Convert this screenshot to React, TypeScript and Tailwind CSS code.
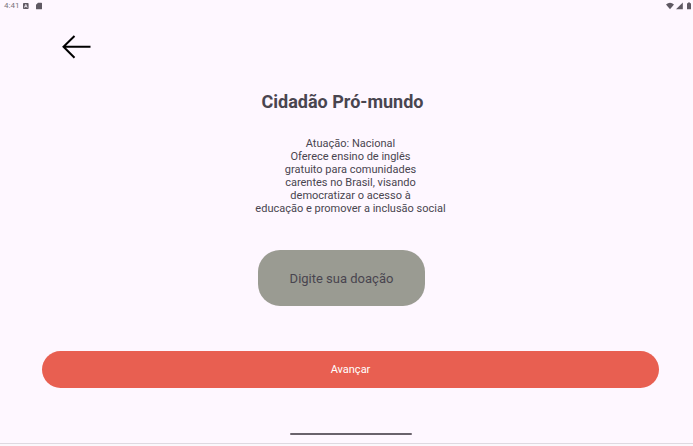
import React from "react";

function StatusBar() {
  return (
    <header className="flex h-3 items-center justify-between pr-px pl-1 text-[#7a747d]">
      <div className="flex items-center">
        <span className="w-[19px] text-[8px] leading-3">4:41</span>
        <svg className="h-2 w-1.5" viewBox="0 0 6 8" aria-hidden="true">
          <rect x="0" y="1" width="5.6" height="6" rx="0.8" fill="#5f5963" />
          <path d="M1.4 5.6 2.8 2.4 4.2 5.6M1.9 4.6h1.8" fill="none" stroke="#fef7ff" strokeWidth="0.8" />
        </svg>
        <svg className="ml-[7px] h-2 w-1.5" viewBox="0 0 6 8" aria-hidden="true">
          <path d="M2 .7h3.4q.6 0 .6.6v5.4q0 .6-.6.6H.6Q0 7.300 0 6.700V2.700z" fill="#5f5963" />
        </svg>
      </div>
      <div className="flex items-center gap-0.5">
        <svg className="h-2 w-2" viewBox="0 0 8 8" aria-hidden="true">
          <path d="M0 2.500Q4-.9 8 2.500L4 7.300z" fill="#5f5963" />
        </svg>
        <svg className="h-2 w-2" viewBox="0 0 8 8" aria-hidden="true">
          <path d="M0 7.300 6.800.5v6.800z" fill="#5f5963" />
        </svg>
        <svg className="h-2 w-1.5" viewBox="0 0 6 8" aria-hidden="true">
          <path d="M1 1.300h1V.5h2v.8h1v6H1z" fill="#5f5963" />
        </svg>
      </div>
    </header>
  );
}

export default function App() {
  return (
    <div className="flex min-h-screen flex-col bg-[#fef7ff] font-['Roboto',sans-serif] text-[#49454f]">
      <StatusBar />
      <main className="flex flex-col pt-5 pr-[34px] pl-[42px]">
        <button type="button" aria-label="Voltar" className="ml-5 h-[30px] w-[30px]">
          <svg viewBox="0 0 30 30" className="h-full w-full" aria-hidden="true">
            <path d="M28.500 14.800H1.500M12.500 4 1.500 14.800l11 11" fill="none" stroke="#000" strokeWidth="2" />
          </svg>
        </button>
        <h1 className="mt-7 pr-4 text-center text-[18px] leading-6 font-bold">Cidadão Pró-mundo</h1>
        <p className="mt-[23px] text-center text-[11px] leading-[13px]">
          Atuação: Nacional
          <br />
          Oferece ensino de inglês
          <br />
          gratuito para comunidades
          <br />
          carentes no Brasil, visando
          <br />
          democratizar o acesso à
          <br />
          educação e promover a inclusão social
        </p>
        <div className="mt-[35px] flex justify-center pr-[18px]">
          <input
            type="text"
            inputMode="decimal"
            aria-label="Digite sua doação"
            placeholder="Digite sua doação"
            className="h-14 w-[167px] rounded-[22px] bg-[#9a9b92] px-4 text-center text-[13px] outline-none placeholder:text-[#49454f] placeholder:opacity-100"
          />
        </div>
        <button
          type="button"
          className="mt-[45px] h-[37px] w-full rounded-full bg-[#e85f51] pt-0.5 text-[11px] text-white"
        >
          Avançar
        </button>
      </main>
      <footer className="mt-auto flex h-[13px] flex-col items-center">
        <div className="flex w-full justify-center pl-2">
          <div className="h-0.5 w-[122px] rounded-full bg-[#6a636c]" />
        </div>
        <div className="mt-auto h-[3px] w-full border-t border-[#dfd9e1] bg-[#fbf8fc]" />
      </footer>
    </div>
  );
}
